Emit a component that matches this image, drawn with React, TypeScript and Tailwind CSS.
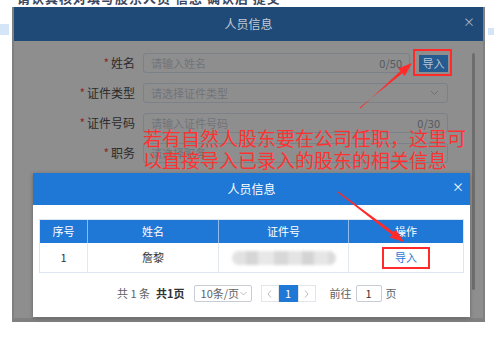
import React from 'react';

const cjk = { fontFamily: '"Noto Sans CJK SC", "Noto Sans", sans-serif' };

const Field: React.FC<{ label: string; placeholder: string; count?: string; select?: boolean; width?: string }> = ({
  label,
  placeholder,
  count,
  select,
  width = 'w-[305px]',
}) => (
  <div className="flex items-center h-[20px]">
    <div className="w-[129px] text-right pr-[8px] text-[12px] text-[#2b2b2b] leading-none">
      <span className="text-[#8a2a2a] mr-[2px]">*</span>
      {label}
    </div>
    <div
      className={`${width} h-[20px] border border-[#7b8089] rounded-[3px] flex items-center justify-between px-[7px] text-[11px] text-[#707479]`}
    >
      <span>{placeholder}</span>
      {count && <span className="text-[11px] text-[#555a60]">{count}</span>}
      {select && (
        <svg width="9" height="6" viewBox="0 0 9 6" className="mr-[1px]">
          <path d="M1 1l3.5 3.5L8 1" fill="none" stroke="#6b7078" strokeWidth="1" />
        </svg>
      )}
    </div>
  </div>
);

const App: React.FC = () => {
  return (
    <div className="w-[494px] h-[338px] bg-white relative overflow-hidden" style={cjk}>
      <div className="flex h-[322px]">
        {/* left page fragment */}
        <div className="w-[12px] flex flex-col">
          <div className="mt-[24px] w-[9px] h-[11px] bg-[#d3e5f6]" />
        </div>

        <div className="w-[473px] flex flex-col">
          {/* clipped text from the page above */}
          <div className="h-[7px] overflow-hidden pl-[5px]">
            <div className="mt-[-12px] text-[13px] font-bold text-[#3b4760] tracking-[1px] whitespace-nowrap">
              请认真核对填写股东人员 信息 确认后 提交
            </div>
          </div>

          {/* dimmed area with the first dialog */}
          <div className="h-[315px] bg-[#808080] flex pl-[2px]">
            <div className="w-[469px] h-[311px] bg-[#8e8e8e] flex flex-col">
              <div className="h-[34px] bg-[#1f4a77] flex items-center justify-center relative">
                <span className="text-[12px] text-[#c3cbd6]">人员信息</span>
                <span className="absolute right-[8px] top-[6px] text-[12px] text-[#a9b5c5]">×</span>
              </div>
              <div className="flex flex-1">
                <div className="flex-1 flex flex-col gap-[10px] pt-[12px]">
                  <div className="flex items-center">
                    <Field label="姓名" placeholder="请输入姓名" count="0/50" width="w-[267px]" />
                    <div className="ml-[9px] w-[29px] h-[17px] bg-[#265b90] flex items-center justify-center text-[11px] text-[#b8c6d6]">
                      导入
                    </div>
                  </div>
                  <Field label="证件类型" placeholder="请选择证件类型" select />
                  <Field label="证件号码" placeholder="请输入证件号码" count="0/30" />
                  <Field label="职务" placeholder="请选择职务" select />
                </div>
                <div className="w-[11px] pt-[12px] pr-[8px]">
                  <div className="w-[3px] h-[237px] rounded-full bg-[#6e6e6e]" />
                </div>
              </div>
            </div>
          </div>
        </div>

        {/* right page fragment */}
        <div className="w-[9px] flex flex-col">
          <div className="mt-[28px] ml-[3px] w-[6px] h-[7px] bg-[#d3e5f6]" />
        </div>
      </div>

      {/* second dialog */}
      <div className="absolute left-[33px] top-[173px] w-[437px] h-[144px] bg-white shadow-[0_1px_4px_rgba(0,0,0,0.3)] flex flex-col">
        <div className="h-[32px] bg-[#1f78d6] flex items-center justify-center relative">
          <span className="text-[12px] text-white">人员信息</span>
          <span className="absolute right-[6px] top-[5px] text-[12px] text-white">×</span>
        </div>
        <div className="px-[6px] pt-[14px]">
          <div className="border border-[#dde5f0] text-[11px]">
            <div className="flex h-[23px] bg-[#1f78d6] text-white">
              <div className="w-[48px] flex items-center justify-center border-r border-[#8fbbeb]">序号</div>
              <div className="w-[131px] flex items-center justify-center border-r border-[#8fbbeb]">姓名</div>
              <div className="w-[130px] flex items-center justify-center border-r border-[#8fbbeb]">证件号</div>
              <div className="flex-1 flex items-center justify-center">操作</div>
            </div>
            <div className="flex h-[29px] text-[#333]">
              <div className="w-[48px] flex items-center justify-center border-r border-[#e3e8ef]">1</div>
              <div className="w-[131px] flex items-center justify-center border-r border-[#e3e8ef]">詹黎</div>
              <div className="w-[130px] flex items-center justify-center border-r border-[#e3e8ef]">
                <div className="flex h-[14px] blur-[1.5px] rounded-full overflow-hidden">
                  <div className="w-[14px] bg-[#e2e2e2]" />
                  <div className="w-[12px] bg-[#d6d6d6]" />
                  <div className="w-[16px] bg-[#e8e8e8]" />
                  <div className="w-[14px] bg-[#d8d8d8]" />
                  <div className="w-[14px] bg-[#e4e4e4]" />
                  <div className="w-[12px] bg-[#d4d4d4]" />
                  <div className="w-[14px] bg-[#e6e6e6]" />
                  <div className="w-[8px] bg-[#dcdcdc]" />
                </div>
              </div>
              <div className="flex-1 flex items-center justify-center">
                <div className="w-[48px] h-[22px] border-2 border-[#ff2a2a] flex items-center justify-center text-[#1f78d6] text-[11px]">
                  导入
                </div>
              </div>
            </div>
          </div>

          <div className="flex items-center h-[17px] mt-[12px] pl-[78px] text-[11px] text-[#606266] whitespace-nowrap">
            <span className="mr-[6px]">共 1 条</span>
            <span className="font-bold text-[#303133] mr-[9px]">共1页</span>
            <div className="w-[58px] h-[17px] border border-[#c8ccd4] rounded-[2px] flex items-center justify-between pl-[6px] pr-[4px] mr-[9px]">
              <span>10条/页</span>
              <svg width="7" height="5" viewBox="0 0 7 5">
                <path d="M0.5 1l3 3 3-3" fill="none" stroke="#b0b4bb" strokeWidth="0.9" />
              </svg>
            </div>
            <div className="w-[18px] h-[17px] border border-[#e2e5ea] flex items-center justify-center">
              <svg width="5" height="8" viewBox="0 0 5 8">
                <path d="M4 0.5L1 4l3 3.5" fill="none" stroke="#b0b4bb" strokeWidth="0.9" />
              </svg>
            </div>
            <div className="w-[19px] h-[17px] bg-[#1f78d6] text-white flex items-center justify-center">1</div>
            <div className="w-[18px] h-[17px] border border-[#e2e5ea] flex items-center justify-center mr-[14px]">
              <svg width="5" height="8" viewBox="0 0 5 8">
                <path d="M1 0.5L4 4l-3 3.5" fill="none" stroke="#b0b4bb" strokeWidth="0.9" />
              </svg>
            </div>
            <span className="mr-[4px]">前往</span>
            <div className="w-[26px] h-[17px] border border-[#c8ccd4] rounded-[2px] flex items-center justify-center mr-[4px] text-[#333]">
              1
            </div>
            <span>页</span>
          </div>
        </div>
      </div>

      {/* annotations */}
      <div className="absolute left-[413px] top-[49px] w-[39px] h-[27px] border-2 border-[#ff2a2a]" />
      <div className="absolute left-[143px] top-[127px] text-[19px] leading-[22px] text-[#ff3232] whitespace-nowrap">
        <div>若有自然人股东要在公司任职，这里可</div>
        <div>以直接导入已录入的股东的相关信息</div>
      </div>
      <svg className="absolute left-0 top-0" width="494" height="338" viewBox="0 0 494 338">
        <polygon
          points="359.7,107.6 402.4,73.3 404.7,76 412,63 398.1,68.4 400.4,71.1 360.3,108.4"
          fill="#ff2a2a"
        />
        <polygon
          points="337.7,192.4 391.9,234.7 389.8,237.5 404,242 395.8,229.5 393.7,232.3 338.3,191.6"
          fill="#ff2a2a"
        />
      </svg>
    </div>
  );
};

export default App;
